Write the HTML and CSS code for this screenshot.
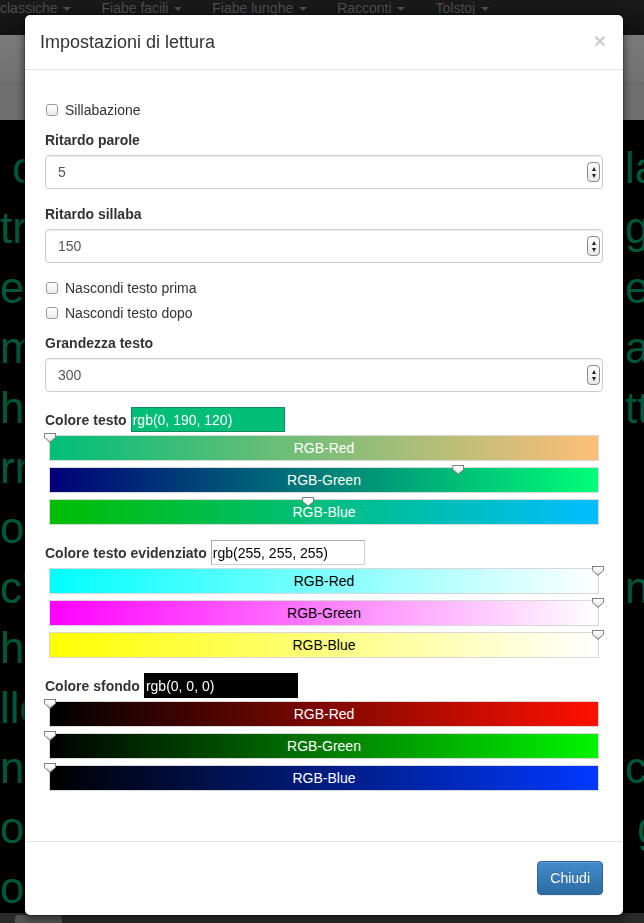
FILE: index.html
```html
<!DOCTYPE html>
<html lang="it">
<head>
<meta charset="utf-8">
<title>Impostazioni di lettura</title>
<link rel="stylesheet" href="styles.css">
</head>
<body>
<div class="page">
  <nav class="navbar">
    <ul class="nav">
      <li class="first">classiche <span class="caret"></span></li>
      <li>Fiabe facili <span class="caret"></span></li>
      <li>Fiabe lunghe <span class="caret"></span></li>
      <li>Racconti <span class="caret"></span></li>
      <li>Tolstoj <span class="caret"></span></li>
    </ul>
  </nav>
  <div class="band1"></div>
  <div class="band2"></div>
  <div class="reader">
    <div class="row"><span class="l">&nbsp;c'era una volta un re</span><span class="r">la</span></div>
    <div class="row"><span class="l">tra i monti e le valli</span><span class="r">ga</span></div>
    <div class="row"><span class="l">e il suo regno era grande</span><span class="r">e i</span></div>
    <div class="row"><span class="l">ma il re era triste</span><span class="r">a</span></div>
    <div class="row"><span class="l">he non aveva figli</span><span class="r">tt</span></div>
    <div class="row"><span class="l">rra lontana e sola</span><span class="r"></span></div>
    <div class="row"><span class="l">or da molti anni</span><span class="r"></span></div>
    <div class="row"><span class="l">c'era una fata buona</span><span class="r">n</span></div>
    <div class="row"><span class="l">he viveva nel bosco</span><span class="r"></span></div>
    <div class="row"><span class="l">llo stesso paese</span><span class="r"></span></div>
    <div class="row"><span class="l">nt ogni giorno</span><span class="r">co</span></div>
    <div class="row"><span class="l">o il sole e la luna</span><span class="r">&nbsp;g</span></div>
    <div class="row"><span class="l">o c'erano le stelle</span><span class="r"></span></div>
  </div>
  <div class="footerbar"><span class="pill"></span></div>
</div>

<div class="backdrop"></div>

<div class="modal">
  <div class="modal-header">
    <button class="close" type="button">&times;</button>
    <h4 class="modal-title">Impostazioni di lettura</h4>
  </div>
  <div class="modal-body">
    <div class="checkbox"><span class="cb"></span>Sillabazione</div>

    <div class="form-group">
      <label class="lbl">Ritardo parole</label>
      <div class="num"><input class="form-control" type="text" value="5"><span class="spin"><i class="up"></i><i class="down"></i></span></div>
    </div>

    <div class="form-group">
      <label class="lbl">Ritardo sillaba</label>
      <div class="num"><input class="form-control" type="text" value="150"><span class="spin"><i class="up"></i><i class="down"></i></span></div>
    </div>

    <div class="checkbox"><span class="cb"></span>Nascondi testo prima</div>
    <div class="checkbox second"><span class="cb"></span>Nascondi testo dopo</div>

    <div class="form-group">
      <label class="lbl">Grandezza testo</label>
      <div class="num"><input class="form-control" type="text" value="300"><span class="spin"><i class="up"></i><i class="down"></i></span></div>
    </div>

    <div class="color-group">
      <div class="color-head"><span class="lbl">Colore testo</span><input class="color-input ci-green" type="text" value="rgb(0, 190, 120)"></div>
      <div class="slider light" style="background-image: linear-gradient(to right, rgb(0,190,120), rgb(255,190,120));"><span class="knob" style="left: 0%;"></span>RGB-Red</div>
      <div class="slider light" style="background-image: linear-gradient(to right, rgb(0,0,120), rgb(0,255,120));"><span class="knob" style="left: 74.5%;"></span>RGB-Green</div>
      <div class="slider light" style="background-image: linear-gradient(to right, rgb(0,190,0), rgb(0,190,255));"><span class="knob" style="left: 47.1%;"></span>RGB-Blue</div>
    </div>

    <div class="color-group">
      <div class="color-head"><span class="lbl">Colore testo evidenziato</span><input class="color-input ci-white" type="text" value="rgb(255, 255, 255)"></div>
      <div class="slider dark" style="background-image: linear-gradient(to right, rgb(0,255,255), rgb(255,255,255));"><span class="knob" style="left: 100%;"></span>RGB-Red</div>
      <div class="slider dark" style="background-image: linear-gradient(to right, rgb(255,0,255), rgb(255,255,255));"><span class="knob" style="left: 100%;"></span>RGB-Green</div>
      <div class="slider dark" style="background-image: linear-gradient(to right, rgb(255,255,0), rgb(255,255,255));"><span class="knob" style="left: 100%;"></span>RGB-Blue</div>
    </div>

    <div class="color-group">
      <div class="color-head"><span class="lbl">Colore sfondo</span><input class="color-input ci-black" type="text" value="rgb(0, 0, 0)"></div>
      <div class="slider light" style="background-image: linear-gradient(to right, rgb(0,0,0), rgb(255,16,0));"><span class="knob" style="left: 0%;"></span>RGB-Red</div>
      <div class="slider light" style="background-image: linear-gradient(to right, rgb(0,0,0), rgb(0,245,0));"><span class="knob" style="left: 0%;"></span>RGB-Green</div>
      <div class="slider light" style="background-image: linear-gradient(to right, rgb(0,0,0), rgb(0,56,255));"><span class="knob" style="left: 0%;"></span>RGB-Blue</div>
    </div>
  </div>
  <div class="modal-footer">
    <button class="btn-primary" type="button">Chiudi</button>
  </div>
</div>
</body>
</html>
```
FILE: styles.css
```css
* { box-sizing: border-box; }
html, body { margin: 0; padding: 0; }
body {
  font-family: "Liberation Sans", Arial, sans-serif;
  font-size: 14px;
  line-height: 20px;
  color: #333;
  background: #000;
  width: 644px;
  height: 923px;
  overflow: hidden;
}

/* background page */
.page {
  height: 923px;
  overflow: hidden;
  background: #000;
  display: flex;
  flex-direction: column;
}
.navbar {
  height: 52px;
  margin-top: -17px;
  background: linear-gradient(#3c3c3c, #222);
  flex: none;
}
.nav {
  list-style: none;
  margin: 0;
  padding: 0;
  display: flex;
}
.nav li {
  padding: 15px 15px;
  color: #999;
  white-space: nowrap;
}
.nav li.first { padding-left: 0; }
.caret {
  display: inline-block;
  width: 0;
  height: 0;
  margin-left: 2px;
  vertical-align: middle;
  border-top: 4px solid #999;
  border-left: 4px solid transparent;
  border-right: 4px solid transparent;
}
.band1 {
  height: 48px;
  flex: none;
  background: linear-gradient(#f6f6f6, #e2e2e2);
}
.band2 {
  height: 37px;
  flex: none;
  background: #dcdcdc;
  border-top: 1px solid #c8c8c8;
}
.reader {
  flex: 1;
  padding-top: 18px;
  background: #000;
  color: rgb(0, 176, 112);
  font-size: 44px;
  overflow: hidden;
}
.row {
  display: flex;
  height: 60px;
  line-height: 60px;
  white-space: nowrap;
  overflow: hidden;
}
.row .l {
  width: 624px;
  flex: none;
  overflow: hidden;
}
.row .r { flex: 1; padding-left: 1px; }
.footerbar {
  height: 10px;
  flex: none;
  background: #555;
  padding-left: 15px;
}
.pill {
  display: block;
  width: 47px;
  height: 12px;
  margin-top: 2px;
  border-radius: 4px;
  background: #aaa;
}

.backdrop {
  position: fixed;
  inset: 0;
  background: rgba(0, 0, 0, 0.5);
}

/* modal */
.modal {
  position: absolute;
  left: 24px;
  top: 14px;
  width: 600px;
  background: #fff;
  border: 1px solid rgba(0, 0, 0, 0.2);
  border-radius: 6px;
  box-shadow: 0 3px 9px rgba(0, 0, 0, 0.5);
  background-clip: padding-box;
}
.modal-header {
  padding: 15px;
  border-bottom: 1px solid #e5e5e5;
}
.modal-title {
  margin: 0;
  font-size: 18px;
  font-weight: 500;
  line-height: 24px;
  color: #333;
}
.close {
  float: right;
  margin-top: 0;
  margin-right: 2px;
  padding: 0;
  border: 0;
  background: transparent;
  font-family: "Liberation Sans", Arial, sans-serif;
  font-size: 21px;
  font-weight: bold;
  line-height: 1;
  color: #000;
  opacity: 0.2;
}
.modal-body {
  padding: 20px;
}
.checkbox {
  position: relative;
  display: flex;
  align-items: center;
  margin: 10px 0;
  padding-left: 20px;
  min-height: 20px;
}
.checkbox.second { margin-top: -5px; }
.cb {
  position: absolute;
  left: 1px;
  top: 4px;
  width: 12px;
  height: 12px;
  border: 1px solid #9a9a9a;
  border-radius: 3px;
  background: linear-gradient(#fff, #ececec);
}
.lbl {
  display: block;
  font-weight: bold;
  margin-bottom: 5px;
}
.form-group { margin-bottom: 15px; }
.num { position: relative; }
.form-control {
  display: block;
  width: 100%;
  height: 34px;
  padding: 6px 12px;
  font-family: "Liberation Sans", Arial, sans-serif;
  font-size: 14px;
  line-height: 20px;
  color: #555;
  background: #fff;
  border: 1px solid #ccc;
  border-radius: 4px;
  box-shadow: inset 0 1px 1px rgba(0, 0, 0, 0.075);
  outline: none;
}
.spin {
  position: absolute;
  right: 3px;
  top: 7px;
  width: 13px;
  height: 20px;
  border: 1px solid #8a8a8a;
  border-radius: 4px;
  background: linear-gradient(#fdfdfd, #e8e8e8);
  display: flex;
  flex-direction: column;
  align-items: center;
  justify-content: center;
  gap: 3px;
}
.spin i {
  display: block;
  width: 0;
  height: 0;
  border-left: 2.5px solid transparent;
  border-right: 2.5px solid transparent;
}
.spin .up { border-bottom: 4px solid #222; }
.spin .down { border-top: 4px solid #222; }

/* colour pickers */
.color-group { margin-bottom: 15px; }
.color-head {
  display: flex;
  align-items: center;
  height: 25px;
  gap: 4px;
}
.color-head .lbl {
  display: inline;
  margin: 0;
}
.color-input {
  width: 154px;
  height: 25px;
  padding: 0 1px;
  font-family: "Liberation Sans", Arial, sans-serif;
  font-size: 14px;
  border: 1px solid;
  outline: none;
}
.ci-green {
  background: rgb(0, 190, 120);
  color: #fff;
  border-color: #148a5c;
}
.ci-white {
  background: #fff;
  color: #000;
  border-color: #a9a9a9 #d0d0d0 #d0d0d0 #a9a9a9;
}
.ci-black {
  background: #000;
  color: #fff;
  border-color: #000;
}
.slider {
  position: relative;
  height: 26px;
  margin: 6px 4px 0 4px;
  border: 1px solid #d8d8d8;
  text-align: center;
  font-size: 14px;
  line-height: 24px;
}
.color-head + .slider { margin-top: 3px; }
.slider.light { color: #fff; }
.slider.dark { color: #000; }
.knob {
  position: absolute;
  top: -3px;
  width: 12px;
  height: 10px;
  margin-left: -6px;
  background: #808080;
  clip-path: polygon(0 0, 100% 0, 100% 45%, 50% 100%, 0 45%);
}
.knob::after {
  content: "";
  position: absolute;
  left: 1px;
  top: 1px;
  right: 1px;
  bottom: 1.5px;
  background: linear-gradient(#fff, #e6e6e6);
  clip-path: polygon(0 0, 100% 0, 100% 45%, 50% 100%, 0 45%);
}

.modal-footer {
  margin-top: 15px;
  padding: 19px 20px 20px;
  border-top: 1px solid #e5e5e5;
  display: flex;
  justify-content: flex-end;
}
.btn-primary {
  height: 34px;
  padding: 6px 12px;
  font-family: "Liberation Sans", Arial, sans-serif;
  font-size: 14px;
  line-height: 20px;
  color: #fff;
  background-image: linear-gradient(#428bca, #2d6ca2);
  border: 1px solid #2b669a;
  border-radius: 4px;
  text-shadow: 0 -1px 0 rgba(0, 0, 0, 0.2);
  box-shadow: inset 0 1px 0 rgba(255, 255, 255, 0.15), 0 1px 1px rgba(0, 0, 0, 0.075);
}
```
